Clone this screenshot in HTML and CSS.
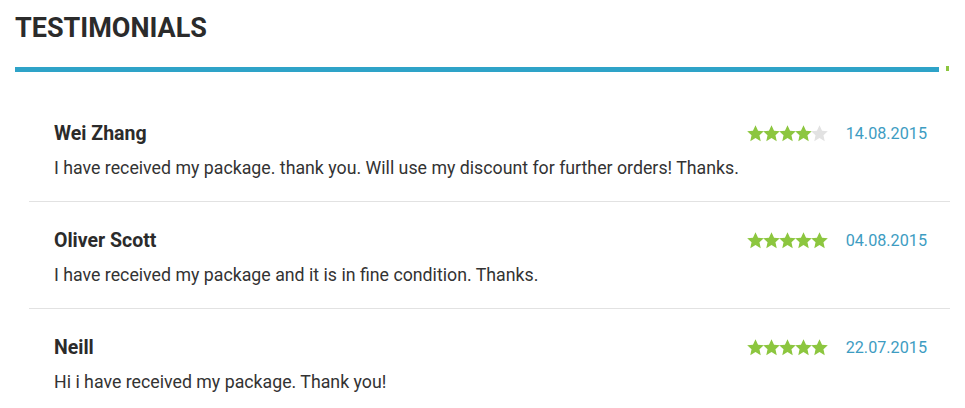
FILE: index.html
```html
<!DOCTYPE html>
<html lang="en">

<head>
    <meta charset="UTF-8">
    <meta name="viewport" content="width=device-width, initial-scale=1.0">
    <link rel="stylesheet" href="styles.css">
    <title>Testimonials</title>
</head>

<body>
    <div class="testimonials">
        <h2 class="section-title">TESTIMONIALS</h2>
        <div class="title-rule">
            <span class="rule-bar"></span>
            <span class="rule-dot"></span>
        </div>

        <ul class="review-list">
            <li class="review">
                <div class="review-head">
                    <span class="review-name">Wei Zhang</span>
                    <span class="review-meta">
                        <span class="stars">
                            <svg class="star on" viewBox="0 0 24 24"><path d="M12 1.5l3.2 7 7.3.7-5.5 5 1.6 7.5L12 17.8l-6.6 3.9L7 14.2l-5.5-5 7.3-.7z"/></svg>
                            <svg class="star on" viewBox="0 0 24 24"><path d="M12 1.5l3.2 7 7.3.7-5.5 5 1.6 7.5L12 17.8l-6.6 3.9L7 14.2l-5.5-5 7.3-.7z"/></svg>
                            <svg class="star on" viewBox="0 0 24 24"><path d="M12 1.5l3.2 7 7.3.7-5.5 5 1.6 7.5L12 17.8l-6.6 3.9L7 14.2l-5.5-5 7.3-.7z"/></svg>
                            <svg class="star on" viewBox="0 0 24 24"><path d="M12 1.5l3.2 7 7.3.7-5.5 5 1.6 7.5L12 17.8l-6.6 3.9L7 14.2l-5.5-5 7.3-.7z"/></svg>
                            <svg class="star" viewBox="0 0 24 24"><path d="M12 1.5l3.2 7 7.3.7-5.5 5 1.6 7.5L12 17.8l-6.6 3.9L7 14.2l-5.5-5 7.3-.7z"/></svg>
                        </span>
                        <span class="review-date">14.08.2015</span>
                    </span>
                </div>
                <p class="review-text">I have received my package. thank you. Will use my discount for further orders! Thanks.</p>
            </li>
            <li class="review">
                <div class="review-head">
                    <span class="review-name">Oliver Scott</span>
                    <span class="review-meta">
                        <span class="stars">
                            <svg class="star on" viewBox="0 0 24 24"><path d="M12 1.5l3.2 7 7.3.7-5.5 5 1.6 7.5L12 17.8l-6.6 3.9L7 14.2l-5.5-5 7.3-.7z"/></svg>
                            <svg class="star on" viewBox="0 0 24 24"><path d="M12 1.5l3.2 7 7.3.7-5.5 5 1.6 7.5L12 17.8l-6.6 3.9L7 14.2l-5.5-5 7.3-.7z"/></svg>
                            <svg class="star on" viewBox="0 0 24 24"><path d="M12 1.5l3.2 7 7.3.7-5.5 5 1.6 7.5L12 17.8l-6.6 3.9L7 14.2l-5.5-5 7.3-.7z"/></svg>
                            <svg class="star on" viewBox="0 0 24 24"><path d="M12 1.5l3.2 7 7.3.7-5.5 5 1.6 7.5L12 17.8l-6.6 3.9L7 14.2l-5.5-5 7.3-.7z"/></svg>
                            <svg class="star on" viewBox="0 0 24 24"><path d="M12 1.5l3.2 7 7.3.7-5.5 5 1.6 7.5L12 17.8l-6.6 3.9L7 14.2l-5.5-5 7.3-.7z"/></svg>
                        </span>
                        <span class="review-date">04.08.2015</span>
                    </span>
                </div>
                <p class="review-text">I have received my package and it is in fine condition. Thanks.</p>
            </li>
            <li class="review">
                <div class="review-head">
                    <span class="review-name">Neill</span>
                    <span class="review-meta">
                        <span class="stars">
                            <svg class="star on" viewBox="0 0 24 24"><path d="M12 1.5l3.2 7 7.3.7-5.5 5 1.6 7.5L12 17.8l-6.6 3.9L7 14.2l-5.5-5 7.3-.7z"/></svg>
                            <svg class="star on" viewBox="0 0 24 24"><path d="M12 1.5l3.2 7 7.3.7-5.5 5 1.6 7.5L12 17.8l-6.6 3.9L7 14.2l-5.5-5 7.3-.7z"/></svg>
                            <svg class="star on" viewBox="0 0 24 24"><path d="M12 1.5l3.2 7 7.3.7-5.5 5 1.6 7.5L12 17.8l-6.6 3.9L7 14.2l-5.5-5 7.3-.7z"/></svg>
                            <svg class="star on" viewBox="0 0 24 24"><path d="M12 1.5l3.2 7 7.3.7-5.5 5 1.6 7.5L12 17.8l-6.6 3.9L7 14.2l-5.5-5 7.3-.7z"/></svg>
                            <svg class="star on" viewBox="0 0 24 24"><path d="M12 1.5l3.2 7 7.3.7-5.5 5 1.6 7.5L12 17.8l-6.6 3.9L7 14.2l-5.5-5 7.3-.7z"/></svg>
                        </span>
                        <span class="review-date">22.07.2015</span>
                    </span>
                </div>
                <p class="review-text">Hi i have received my package. Thank you!</p>
            </li>
        </ul>
    </div>
</body>

</html>
```

FILE: styles.css
```css
body {
    margin: 0;
    background: #fff;
    font-family: Roboto, "Liberation Sans", sans-serif;
    color: #333;
}

.testimonials {
    padding: 12px 15px 0 15px;
}

.section-title {
    margin: 0;
    font-size: 27px;
    font-weight: 700;
    color: #2b2b2b;
    line-height: 33px;
}

.title-rule {
    display: flex;
    align-items: flex-start;
    margin-top: 22px;
}

.rule-bar {
    flex: 1;
    height: 5px;
    background: #2ea3c8;
}

.rule-dot {
    width: 3px;
    height: 5px;
    margin-left: 7px;
    margin-top: -1px;
    margin-right: 1px;
    background: #8cc63f;
}

.review-list {
    list-style: none;
    margin: 32px 0 0 14px;
    padding: 0;
}

.review {
    padding: 27px 23px 22px 25px;
    border-bottom: 1px solid #e2e2e2;
}

.review:first-child {
    padding-top: 18px;
}

.review:last-child {
    border-bottom: none;
}

.review-head {
    display: flex;
    justify-content: space-between;
    align-items: center;
}

.review-name {
    font-size: 19.5px;
    font-weight: 700;
    color: #2b2b2b;
}

.review-meta {
    display: flex;
    align-items: center;
    gap: 19px;
}

.stars {
    display: flex;
}

.star {
    width: 19px;
    height: 19px;
    margin-right: -2.8px;
    fill: #e2e2e2;
}

.star.on {
    fill: #8cc63f;
}

.review-date {
    font-size: 16.2px;
    color: #3d9cc2;
}

.review-text {
    margin: 12px 0 0 0;
    font-size: 17.75px;
    line-height: 22px;
}
```
